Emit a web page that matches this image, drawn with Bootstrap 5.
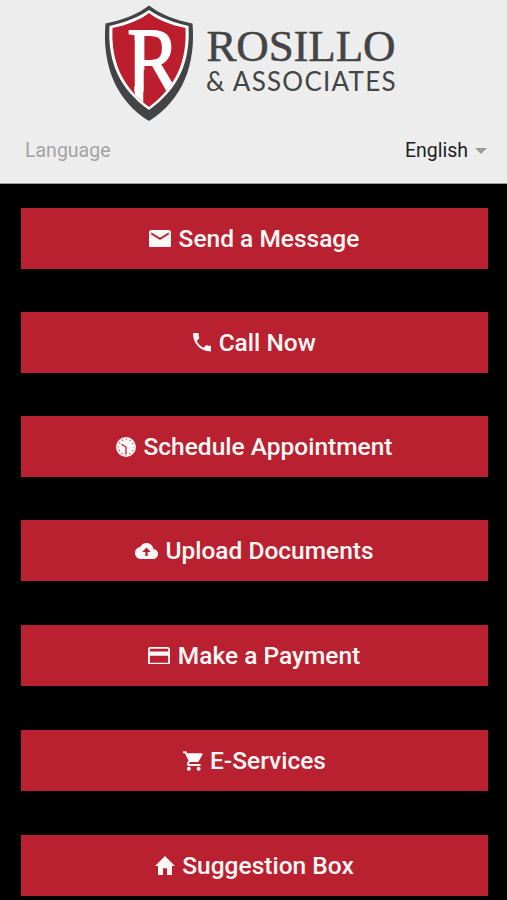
<!DOCTYPE html>
<html lang="en">
<head>
<meta charset="utf-8">
<meta name="viewport" content="width=device-width, initial-scale=1">
<title>Rosillo &amp; Associates</title>
<link href="https://cdn.jsdelivr.net/npm/bootstrap@5.3.0/dist/css/bootstrap.min.css" rel="stylesheet">
<style>
body{background:#000;font-family:Roboto,"Liberation Sans",sans-serif;height:900px;overflow:hidden}
.masthead{background:#ededed;height:183.5px;border-bottom:1px solid #999}
.brand-logo{height:125px}
.lang-row{height:51px;padding:1px 20px 0 25px;font-size:19.5px;line-height:50px}
.lang-label{color:#a3a3a3}
.lang-pick{color:#212121;font-size:19.5px;gap:7px}
.caret{width:12px;height:6px}
.actions{padding:24px 19px 0 20.5px}
.action{height:61px;margin-bottom:43px;background:#b92030;color:#fff8f6;border:0;border-radius:0;font-size:24.5px;font-weight:500;line-height:1;gap:7.5px;padding:1px 0 0}
.action:hover{background:#a51b2a;color:#fff}
.action.wide-gap{margin-bottom:44px}
.action svg{fill:currentColor;flex:none}
.action span{padding-top:1px}
</style>
</head>
<body>
<header class="masthead">
  <svg class="brand-logo d-block" width="507" height="125" viewBox="0 0 507 125" role="img" aria-label="Rosillo &amp; Associates">
    <defs><clipPath id="field"><path d="M149 13C158 20 171 25 185.500 28C187 60 177 86 149 107C121 86 111 60 112.500 28C127 25 140 20 149 13Z"/></clipPath>
    <clipPath id="letter"><path d="M120 25H185V95H156L150 70H143.500V108H134.500V40H120Z"/></clipPath></defs>
    <path fill="#434445" d="M149 5.500C160 14 175 20 192.500 23.500C196 64 183 100 149 121C115 100 102 64 105.500 23.500C123 20 138 14 149 5.500Z"/>
    <path fill="#fff" d="M149 10C159 17 173 22.500 188.500 26C190.500 63 178 89 149 110C120 89 107.500 63 109.500 26C125 22.500 139 17 149 10Z"/>
    <path fill="#bd1e2d" d="M149 13C158 20 171 25 185.500 28C187 60 177 86 149 107C121 86 111 60 112.500 28C127 25 140 20 149 13Z"/>
    <g clip-path="url(#field)"><g clip-path="url(#letter)" fill="#fff"><text transform="translate(127.200 91) scale(.86 1)" font-family="Liberation Serif,serif" font-size="91" stroke="#fff" stroke-width="2">R</text><path d="M134.500 32h9v76h-9z"/></g></g>
    <g fill="#434445"><text x="206.500" y="60.500" font-family="Liberation Serif,serif" font-size="45" textLength="189" stroke="#434445" stroke-width=".5">ROSILLO</text>
    <text x="206" y="90.500" font-family="Lato,sans-serif" font-size="26" textLength="189.500" lengthAdjust="spacing">&amp; ASSOCIATES</text></g>
  </svg>
  <div class="lang-row d-flex justify-content-between align-items-center">
    <span class="lang-label">Language</span>
    <span class="lang-pick d-flex align-items-center">English<svg class="caret" viewBox="0 0 12 6"><path d="M0 0h12L6 6z" fill="#999"/></svg></span>
  </div>
</header>
<main class="actions d-flex flex-column">
  <button class="action btn d-flex justify-content-center align-items-center"><svg width="22" height="17.600" viewBox="2 4 20 16"><path d="M20 4H4c-1.100 0-1.990.9-1.990 2L2 18c0 1.100.9 2 2 2h16c1.100 0 2-.9 2-2V6c0-1.100-.9-2-2-2zm0 4l-8 5-8-5V6l8 5 8-5v2z"/></svg><span>Send a Message</span></button>
  <button class="action btn d-flex justify-content-center align-items-center"><svg width="18.500" height="18.500" viewBox="3 3 18 18"><path d="M6.620 10.790c1.440 2.830 3.760 5.140 6.590 6.590l2.200-2.200c.27-.27.670-.36 1.020-.24 1.120.37 2.330.57 3.570.57.550 0 1 .45 1 1V20c0 .55-.45 1-1 1-9.390 0-17-7.610-17-17 0-.55.450-1 1-1h3.500c.55 0 1 .45 1 1 0 1.250.2 2.450.57 3.570.11.350.03.740-.25 1.020l-2.200 2.200z"/></svg><span>Call Now</span></button>
  <button class="action btn d-flex justify-content-center align-items-center"><svg width="20" height="20" viewBox="0 0 20 20"><circle cx="10" cy="10" r="10"/><circle cx="10" cy="10" r="7.700" fill="none" stroke="#b92030" stroke-width="1.500" stroke-dasharray=".8 3.232" stroke-dashoffset=".4"/><path d="M10 17v-7L5.500 7.300" fill="none" stroke="#b92030" stroke-width="1.300"/></svg><span>Schedule Appointment</span></button>
  <button class="action wide-gap btn d-flex justify-content-center align-items-center"><svg width="23" height="16" viewBox="0 4 24 16" preserveAspectRatio="none"><path d="M19.350 10.040C18.670 6.590 15.640 4 12 4 9.110 4 6.600 5.640 5.350 8.040 2.340 8.360 0 10.910 0 14c0 3.310 2.690 6 6 6h13c2.760 0 5-2.240 5-5 0-2.640-2.050-4.780-4.650-4.960zM13.200 13v4h-2.400v-4H7.500L12 8.500l4.500 4.500h-3.300z"/></svg><span>Upload Documents</span></button>
  <button class="action wide-gap btn d-flex justify-content-center align-items-center"><svg width="22" height="17.600" viewBox="2 4 20 16"><path d="M20 4H4c-1.110 0-1.990.89-1.990 2L2 18c0 1.110.89 2 2 2h16c1.110 0 2-.89 2-2V6c0-1.110-.89-2-2-2zm.3 14.300H3.700V12h16.600v6.300zM20.300 8H3.700V5.700h16.600V8z"/></svg><span>Make a Payment</span></button>
  <button class="action wide-gap btn d-flex justify-content-center align-items-center"><svg width="20" height="20" viewBox="1 2 20.500 20"><path d="M7 18c-1.100 0-1.990.9-1.990 2S5.900 22 7 22s2-.9 2-2-.9-2-2-2zM1 2v2h2l3.600 7.590-1.350 2.450c-.16.280-.25.610-.25.960 0 1.100.9 2 2 2h12v-2H7.420c-.14 0-.25-.11-.25-.25l.03-.12.900-1.630h7.450c.75 0 1.410-.41 1.750-1.030l3.580-6.490c.08-.14.120-.31.120-.48 0-.55-.45-1-1-1H5.210l-.94-2H1zm16 16c-1.100 0-1.990.9-1.990 2s.89 2 1.990 2 2-.9 2-2-.9-2-2-2z"/></svg><span>E-Services</span></button>
  <button class="action btn d-flex justify-content-center align-items-center"><svg width="20" height="19" viewBox="2 3 20 17" preserveAspectRatio="none"><path d="M10 20v-6h4v6h5v-8h3L12 3 2 12h3v8z"/></svg><span>Suggestion Box</span></button>
</main>
<script src="https://cdn.jsdelivr.net/npm/bootstrap@5.3.0/dist/js/bootstrap.bundle.min.js"></script>
</body>
</html>
